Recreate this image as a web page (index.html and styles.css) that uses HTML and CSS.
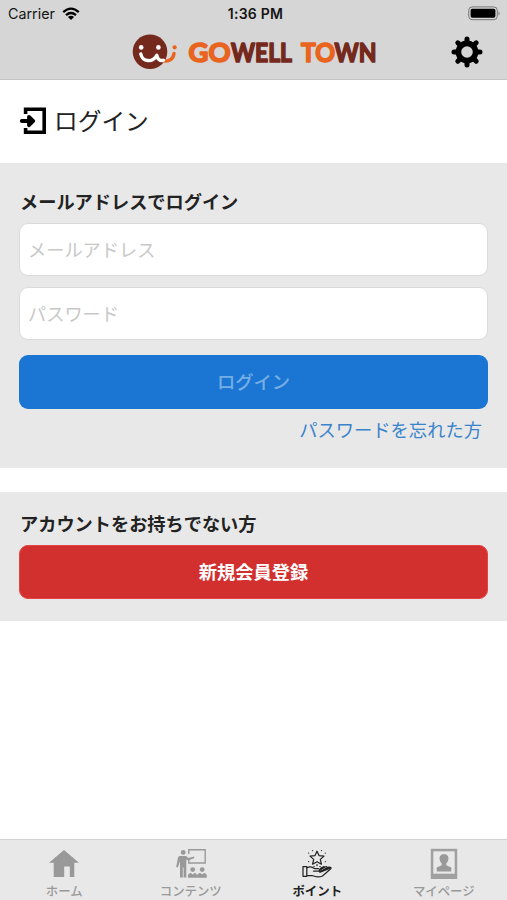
FILE: index.html
```html
<!DOCTYPE html>
<html lang="ja">
<head>
<meta charset="utf-8">
<meta name="viewport" content="width=device-width">
<title>GOWELL TOWN</title>
<link rel="stylesheet" href="styles.css">
</head>
<body>
<header class="header">
  <div class="status">
    <div class="carrier">Carrier
      <svg width="18" height="14" viewBox="0 0 18 14" fill="none" stroke="#000" stroke-width="2.3"><path d="M1.2 5.1Q9-1.8 16.8 5.1M4 8.1Q9 3.8 14 8.1"/><path d="M9 13L5.9 9.9Q9 7.4 12.1 9.9Z" fill="#000" stroke="none"/></svg>
    </div>
    <div class="time">1:36 PM</div>
    <svg class="battery" width="33" height="15" viewBox="0 0 33 15"><rect x=".7" y=".9" width="28.6" height="12.8" rx="3.5" fill="none" stroke="#777"/><rect x="2.6" y="2.8" width="24.8" height="9" rx="1.7"/><path d="M30.6 5Q32.6 7.3 30.6 9.6Z" fill="#777"/></svg>
  </div>
  <div class="brand">
    <svg class="logo" width="256" height="38" viewBox="0 0 256 38">
      <circle cx="18" cy="18.7" r="17.3" fill="#74291c"/>
      <g fill="none" stroke-width="3.4" stroke-linecap="round" stroke-linejoin="round">
        <path d="M32.2 28C37.5 28.7 41.5 25.5 42 20.5" stroke="#e8641f"/>
        <path d="M8.8 21C10.5 29 20.5 30 24.8 22.3C25.5 26 28 28.3 31.3 27.3" stroke="#fff"/>
      </g>
      <circle cx="9.2" cy="14.4" r="2.3" fill="#fff"/><circle cx="26.4" cy="14.4" r="2.3" fill="#fff"/><circle cx="42.6" cy="14.3" r="2.1" fill="#e8641f"/>
      <g class="wordmark">
        <text class="orange" x="56.5" y="28.5" textLength="42" lengthAdjust="spacingAndGlyphs">GO</text>
        <text class="brown" x="99" y="28.5" textLength="61" lengthAdjust="spacingAndGlyphs">WELL</text>
        <text class="orange" x="169" y="28.5" textLength="34" lengthAdjust="spacingAndGlyphs">TO</text>
        <text class="brown" x="202.5" y="28.5" textLength="42" lengthAdjust="spacingAndGlyphs">WN</text>
      </g>
    </svg>
    <svg class="gear" width="32" height="32" viewBox="-16 -16 32 32">
      <circle r="8.6" fill="none" stroke="#000" stroke-width="5.6"/>
      <g stroke="#000" stroke-width="5" stroke-linecap="round"><path d="M0-10V-13M0 10V13M-10 0H-13M10 0H13M7.2-7.2L9.2-9.2M-7.2-7.2L-9.2-9.2M7.2 7.2L9.2 9.2M-7.2 7.2L-9.2 9.2"/></g>
    </svg>
  </div>
</header>
<main>
  <h1 class="title">
    <svg width="28" height="28" viewBox="0 0 28 28"><path d="M6.6 7V2.3H25.2V25.2H6.6V21" fill="none" stroke="#000" stroke-width="3.6"/><path d="M2.8 14H12M10 9.8L14.3 14L10 18.2Z" fill="#000" stroke="#000" stroke-width="3.8" stroke-linecap="round" stroke-linejoin="round"/></svg>
    <span>ログイン</span>
  </h1>
  <section class="panel login">
    <h2>メールアドレスでログイン</h2>
    <input class="field" type="email" placeholder="メールアドレス">
    <input class="field" type="password" placeholder="パスワード">
    <button class="btn blue">ログイン</button>
    <a class="forgot">パスワードを忘れた方</a>
  </section>
  <section class="panel signup">
    <h2>アカウントをお持ちでない方</h2>
    <button class="btn red">新規会員登録</button>
  </section>
</main>
<nav class="tabs">
  <a class="tab">
    <svg width="34" height="34" viewBox="0 0 34 34" fill="#999"><path d="M17 4L32 16.8H27.3V31H22.8V20.5H17.2V31H6.7V16.8H2Z"/></svg>
    <span>ホーム</span>
  </a>
  <a class="tab">
    <svg width="34" height="34" viewBox="0 0 34 34" fill="#999"><path d="M14.8 8V3.8H31.2V17H14.8V13" fill="none" stroke="#999" stroke-width="1.4"/><circle cx="9.2" cy="6.4" r="2.4"/><path d="M5.2 10H12L14.5 12L20 10.6L20.5 12L14.5 14.4L12.3 13.6V31.5H9.6V21.5H8.8V31.5H6V15L3.9 21.5L2.2 21L4 11.5Z"/><circle cx="18.7" cy="23.6" r="2.4"/><circle cx="28.2" cy="23.6" r="2.4"/><path d="M14 31.8V29.5Q14.2 27 17 27L18.7 28.5L20.5 27Q23 27 23.3 29.5Q23.6 27 26.4 27L28.2 28.5L30 27Q32.5 27 32.8 29.5V31.8Z"/></svg>
    <span>コンテンツ</span>
  </a>
  <a class="tab active">
    <svg width="34" height="34" viewBox="0 0 34 34" fill="none" stroke="#222" stroke-width="1.25" stroke-linejoin="round" stroke-linecap="round"><path d="M17 5.2L19 9.6L24 10.1L20.3 13.4L21.4 18.2L17 15.7L12.6 18.2L13.7 13.4L10 10.1L15 9.6Z"/><path d="M12.5 4.5V4.6M21.5 4.5V4.6M8.7 7V7.1M25.3 7V7.1M8.7 15.5V15.6M25.3 15.5V15.6M14 20.3V20.4M20 20.3V20.4M17 18.7V19.5"/><path d="M3 20.5H6.8V30.3H3ZM6.8 22Q10.5 19.5 14.5 22.5H18Q20.5 23 19 25H13.5M19.5 24.5L25 21Q27.5 20 27 22M24 23.5L29 21Q32.3 21 30.5 23L22.5 30Q18 32 12 29.5H6.8M20.5 22.4L23.5 20.7L25.2 21"/><path d="M20 25.8L29.5 22" stroke-width="2"/></svg>
    <span>ポイント</span>
  </a>
  <a class="tab">
    <svg width="34" height="34" viewBox="0 0 34 34"><path d="M3.8 2.8H30.2V33H3.8Z" fill="#a0a0a0"/><path d="M6.3 5.3H27.7V27.7H6.3Z" fill="#e8e8e8"/><path d="M17 8.2C20.2 8.2 21.8 10.3 21.4 13C21.2 15 20.4 16.3 19.3 17.2V19.2L24.3 21.4V25.5H9.7V21.4L14.7 19.2V17.2C13.6 16.3 12.8 15 12.6 13C12.2 10.3 13.8 8.2 17 8.2Z" fill="#999"/></svg>
    <span>マイページ</span>
  </a>
</nav>
</body>
</html>
```
FILE: styles.css
```css
* { box-sizing: border-box; }
body {
  margin: 0;
  height: 900px;
  display: flex;
  flex-direction: column;
  background: #fff;
  color: #222;
  font-family: "Noto Sans CJK JP", sans-serif;
  overflow: hidden;
}
svg { display: block; flex: none; }
.header { height: 80px; background: #d6d6d6; border-bottom: 1px solid #c4c4c4; }
.status {
  height: 27px;
  display: grid;
  grid-template-columns: 1fr auto 1fr;
  align-items: center;
  padding: 0 6px 0 8px;
  font: 14.3px/27px Inter, sans-serif;
  color: #151515;
}
.carrier { display: flex; align-items: center; gap: 7px; }
.time { font-weight: 600; font-size: 14px; letter-spacing: .25px; padding-left: 2px; }
.battery { justify-self: end; }
.brand {
  height: 50px;
  display: flex;
  justify-content: space-between;
  align-items: center;
  padding: 0 24px 0 132px;
}
.wordmark { font: 700 27px Lato, sans-serif; stroke-width: 1.7px; stroke-linejoin: round; }
.orange { fill: #e8641f; stroke: #e8641f; }
.brown { fill: #74291c; stroke: #74291c; }
.title {
  height: 83px;
  margin: 0;
  padding: 0 19px 2px;
  display: flex;
  align-items: center;
  gap: 7px;
  font-size: 23.7px;
  line-height: 36px;
  font-weight: 400;
}
.title span { margin-top: -2px; }
.panel { background: #e8e8e8; padding: 0 19px; display: flex; flex-direction: column; }
.panel h2 { margin: 0; font-size: 18.2px; line-height: 28px; font-weight: 700; padding-left: 1px; }
.login { height: 305px; padding-top: 24px; }
.signup { height: 129px; margin-top: 24px; padding-top: 17px; }
.field {
  height: 53px;
  margin: 8px 0 0;
  padding: 0 8px 2px;
  border: 1px solid #dadada;
  border-radius: 9px;
  background: #fff;
  font: 18.2px "Noto Sans CJK JP", sans-serif;
  outline: 0;
}
.field + .field { margin-top: 11px; }
.field::placeholder { color: #c8c8c8; opacity: 1; }
.btn {
  height: 54px;
  margin: 15px 0 0;
  border: 0;
  border-radius: 9px;
  padding: 0 0 2px;
  font: 700 18.3px "Noto Sans CJK JP", sans-serif;
  color: #fff;
}
.blue { background: #1b76d3; color: #75ade5; font-weight: 500; }
.red { background: #d22f2f; margin-top: 8px; border: 1px solid #e64343; }
.forgot { align-self: flex-end; margin: 6px 6px 0 0; font-size: 18.3px; line-height: 28px; color: #3a84cc; }
.tabs {
  height: 61px;
  margin-top: auto;
  padding-left: 1px;
  display: grid;
  grid-template-columns: repeat(4, 1fr);
  background: #e8e8e8;
  border-top: 1px solid #d2d2d2;
}
.tab {
  display: flex;
  flex-direction: column;
  align-items: center;
  padding-top: 6px;
  font-size: 12.4px;
  line-height: 18px;
  font-weight: 500;
  color: #999;
}
.tab span { margin-top: 2px; }
.active { color: #222; font-weight: 700; }
```
